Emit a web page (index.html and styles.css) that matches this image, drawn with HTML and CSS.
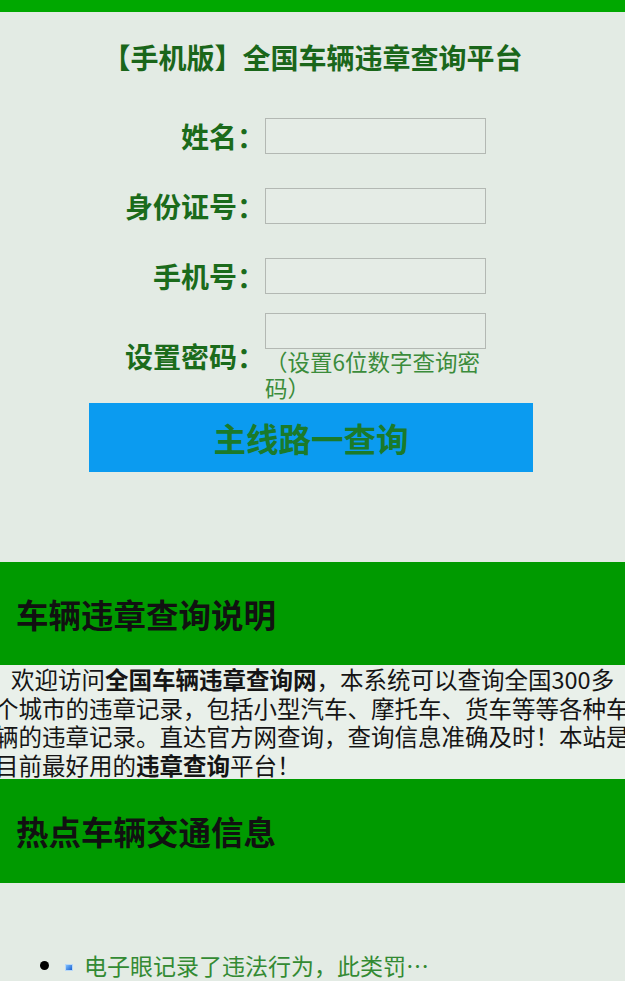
FILE: index.html
```html
<!DOCTYPE html>
<html lang="zh-CN">
<head>
<meta charset="utf-8">
<title>【手机版】全国车辆违章查询平台</title>
<link rel="stylesheet" href="styles.css">
</head>
<body>
<div class="topbar"></div>
<h1 class="title">【手机版】全国车辆违章查询平台</h1>
<form class="form">
  <div class="row">
    <label class="label">姓名：</label>
    <div class="field"><input class="input" type="text"></div>
  </div>
  <div class="row">
    <label class="label">身份证号：</label>
    <div class="field"><input class="input" type="text"></div>
  </div>
  <div class="row">
    <label class="label">手机号：</label>
    <div class="field"><input class="input" type="text"></div>
  </div>
  <div class="row row-pwd">
    <label class="label">设置密码：</label>
    <div class="field field-pwd">
      <input class="input" type="password">
      <div class="hint">（设置6位数字查询密码）</div>
    </div>
  </div>
  <button class="btn" type="button">主线路一查询</button>
</form>
<section class="band band-first">
  <h2 class="band-title">车辆违章查询说明</h2>
</section>
<p class="intro">欢迎访问<b>全国车辆违章查询网</b>，本系统可以查询全国300多个城市的违章记录，包括小型汽车、摩托车、货车等等各种车辆的违章记录。直达官方网查询，查询信息准确及时！本站是目前最好用的<b>违章查询</b>平台！</p>
<section class="band">
  <h2 class="band-title">热点车辆交通信息</h2>
</section>
<ul class="news">
  <li class="news-item"><span class="news-icon"></span><a class="news-link" href="#">电子眼记录了违法行为，此类罚…</a></li>
</ul>
</body>
</html>
```

FILE: styles.css
```css
html, body {
  margin: 0;
  padding: 0;
}
body {
  background: #e3ebe4;
  font-family: "Noto Sans CJK SC", "Noto Sans", sans-serif;
  overflow: hidden;
  width: 625px;
}
.topbar {
  height: 12px;
  background: #00a800;
}
.title {
  margin: 0;
  padding: 25px 0 24px;
  text-align: center;
  font-size: 28px;
  line-height: 40px;
  font-weight: bold;
  color: #1a661a;
}
.form {
  margin: 0;
  display: flex;
  flex-direction: column;
}
.row {
  display: grid;
  grid-template-columns: 265px 221px;
  align-items: center;
  height: 70px;
}
.row-pwd {
  height: 90px;
}
.label {
  text-align: right;
  font-size: 28px;
  font-weight: bold;
  color: #1b6b1b;
  line-height: 36px;
}
.field {
  display: flex;
  flex-direction: column;
}
.field-pwd {
  align-self: start;
  padding-top: 2px;
}
.input {
  box-sizing: border-box;
  width: 221px;
  height: 36px;
  margin: 0;
  border: 1px solid #b3b8b3;
  background: #e5ece6;
  outline: none;
}
.hint {
  font-size: 22.5px;
  line-height: 25.5px;
  color: #3b8c3b;
}
.btn {
  display: block;
  width: 444px;
  height: 69px;
  margin: 2px 0 0 89px;
  padding: 0;
  border: none;
  background: #0b9bf0;
  color: #1b7a2a;
  font-family: "Noto Sans CJK SC", "Noto Sans", sans-serif;
  font-size: 32.5px;
  font-weight: bold;
}
.band {
  background: #009a00;
  height: 104px;
  display: flex;
  align-items: center;
  padding-left: 16px;
}
.band-first {
  margin-top: 90px;
  height: 103px;
}
.band-title {
  margin: 0;
  font-size: 32.5px;
  font-weight: bold;
  color: #111;
  line-height: 40px;
}
.intro {
  margin: 0 0 0 -5px;
  width: 635px;
  background: #e9f0ea;
  color: #151515;
  font-size: 23.5px;
  line-height: 28.5px;
  text-indent: 16px;
}
.intro b {
  font-weight: bold;
}
.news {
  margin: 67px 0 0;
  padding-left: 65px;
  list-style: disc;
}
.news-item {
  font-size: 23px;
  line-height: 30px;
  color: #000;
}
.news-icon {
  display: inline-block;
  width: 8px;
  height: 7px;
  margin-right: 11px;
  vertical-align: 4px;
  background: linear-gradient(135deg, #7cc0ff, #1a5fd0);
  border: 1px solid #b8d8f8;
  box-sizing: border-box;
}
.news-link {
  color: #338a33;
  text-decoration: none;
}
```
